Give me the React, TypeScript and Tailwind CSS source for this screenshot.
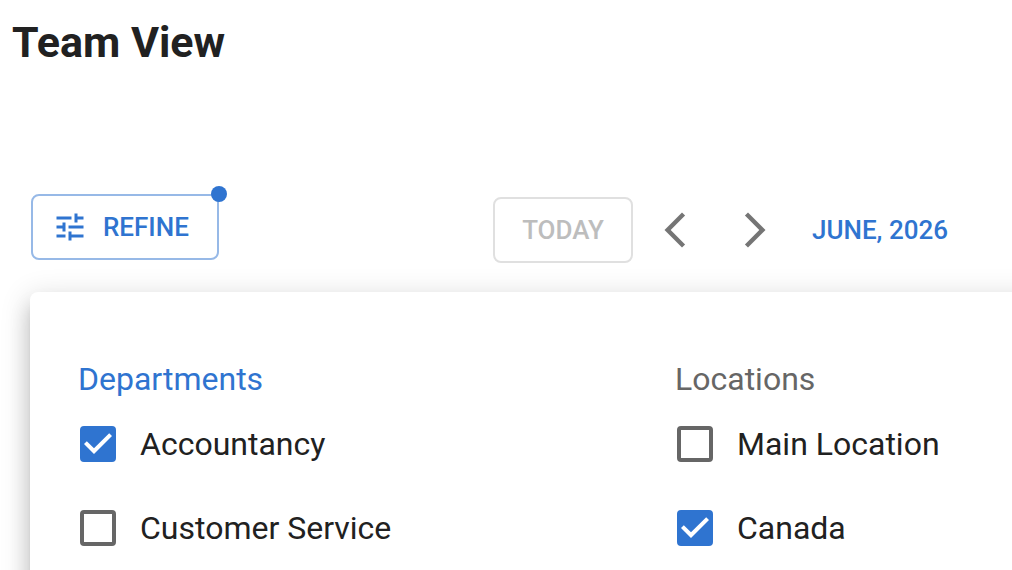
import { useState } from "react";

type Option = { id: string; label: string; checked: boolean };

const departments: Option[] = [
  { id: "dept-accountancy", label: "Accountancy", checked: true },
  { id: "dept-customer-service", label: "Customer Service", checked: false },
];

const locations: Option[] = [
  { id: "loc-main", label: "Main Location", checked: false },
  { id: "loc-canada", label: "Canada", checked: true },
];

function CheckOption({ option }: { option: Option }) {
  const [checked, setChecked] = useState(option.checked);
  return (
    <div className="flex h-9 items-center gap-6">
      <span className="relative flex size-9 shrink-0">
        <input
          id={option.id}
          type="checkbox"
          checked={checked}
          onChange={(e) => setChecked(e.target.checked)}
          className="size-9 cursor-pointer appearance-none rounded-sm border-4 border-[#666666] checked:border-[#2f74d0] checked:bg-[#2f74d0]"
        />
        {checked && (
          <svg
            viewBox="3 3 18 18"
            className="pointer-events-none absolute inset-0 size-9 fill-white"
            aria-hidden="true"
          >
            <path d="M10 17l-5-5 1.41-1.41L10 14.17l7.59-7.59L19 8z" />
          </svg>
        )}
      </span>
      <label htmlFor={option.id} className="cursor-pointer text-[32px] leading-9 whitespace-nowrap">
        {option.label}
      </label>
    </div>
  );
}

function FilterGroup({ title, active, options }: { title: string; active?: boolean; options: Option[] }) {
  return (
    <fieldset className="min-w-0">
      <legend className={active ? "text-[32px] leading-9 text-[#2f74d0]" : "text-[32px] leading-9 text-[#666666]"}>
        {title}
      </legend>
      <div className="mt-[29px] flex flex-col gap-12 pl-0.5">
        {options.map((option) => (
          <CheckOption key={option.id} option={option} />
        ))}
      </div>
    </fieldset>
  );
}

export default function App() {
  return (
    <main className="flex h-screen flex-col overflow-hidden bg-white font-[Roboto,sans-serif] text-[#212121]">
      <h1 className="px-3 pt-4 text-[43px] leading-[52px] font-bold">Team View</h1>

      <div className="mt-[126px] flex items-start justify-between pr-16 pl-[31px]">
        <button
          type="button"
          className="relative flex h-[66px] items-center gap-[15px] rounded-lg border-2 border-[#97b9e7] pr-7 pl-[19px] text-[26px] font-medium text-[#2f74d0]"
        >
          <svg viewBox="0 0 24 24" className="size-9 fill-current" aria-hidden="true">
            <path d="M3 17v2h6v-2H3zM3 5v2h10V5H3zm10 16v-2h8v-2h-8v-2h-2v6h2zM7 9v2H3v2h4v2h2V9H7zm14 4v-2H11v2h10zm-6-4h2V7h4V5h-4V3h-2v6z" />
          </svg>
          REFINE
          <span className="absolute -top-2.5 -right-2.5 size-4 rounded-full bg-[#2f74d0]" />
        </button>

        <div className="mt-[3px] flex items-center">
          <button
            type="button"
            disabled
            className="h-[66px] w-[140px] rounded-lg border-2 border-[#e0e0e0] text-[26px] font-medium text-[#bdbdbd]"
          >
            TODAY
          </button>
          <button type="button" aria-label="Previous month" className="ml-[21px] text-[#757575]">
            <svg viewBox="0 0 24 24" className="size-[42px] fill-current" aria-hidden="true">
              <path d="M17.77 3.77 16 2 6 12l10 10 1.77-1.77L9.54 12z" />
            </svg>
          </button>
          <button type="button" aria-label="Next month" className="ml-[38px] text-[#757575]">
            <svg viewBox="0 0 24 24" className="size-[42px] fill-current" aria-hidden="true">
              <path d="M6.23 20.23 8 22l10-10L8 2 6.23 3.77 14.46 12z" />
            </svg>
          </button>
          <button type="button" className="ml-9 text-[26px] font-medium whitespace-nowrap text-[#2f74d0]">
            JUNE, 2026
          </button>
        </div>
      </div>

      <section
        aria-label="Filters"
        className="mt-[29px] -mr-10 -mb-16 ml-[30px] grid flex-1 grid-cols-[597px_1fr] content-start rounded-lg bg-white pt-[69px] pl-12 shadow-[0_10px_10px_-6px_rgba(0,0,0,0.2),0_16px_20px_2px_rgba(0,0,0,0.14),0_6px_28px_4px_rgba(0,0,0,0.12)]"
      >
        <FilterGroup title="Departments" active options={departments} />
        <FilterGroup title="Locations" options={locations} />
      </section>
    </main>
  );
}
